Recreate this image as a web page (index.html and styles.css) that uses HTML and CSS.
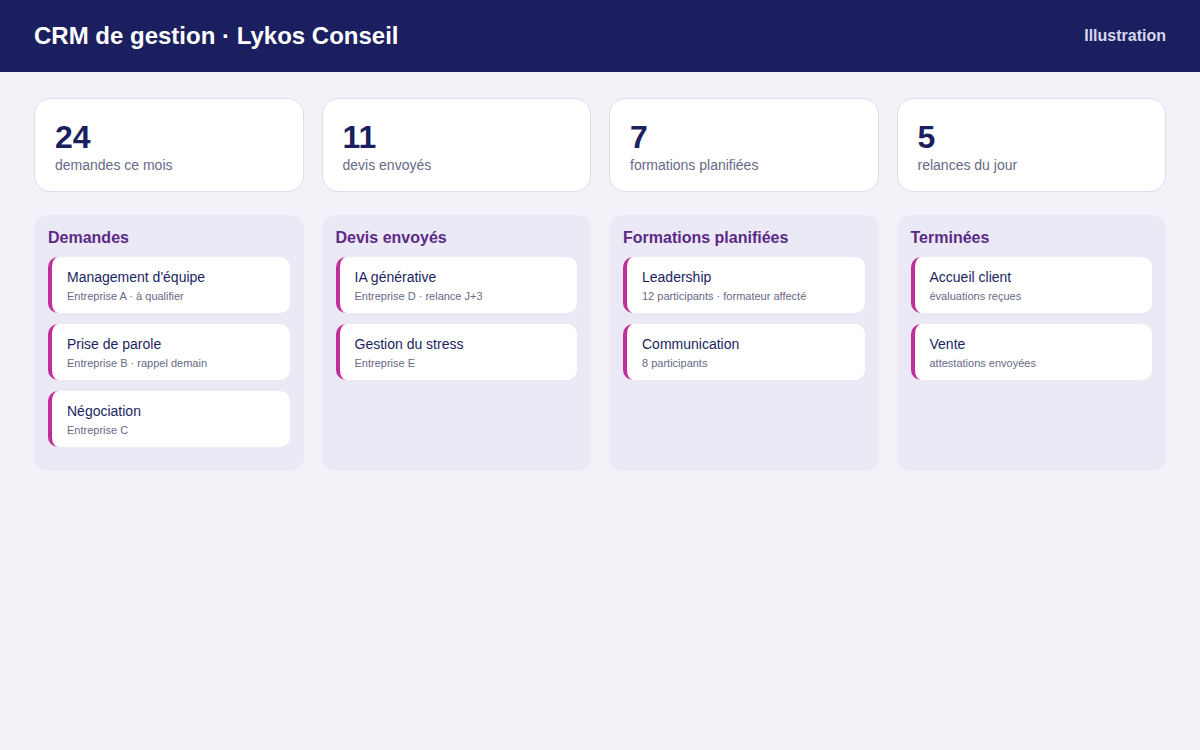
FILE: index.html
```html
<!DOCTYPE html>
<html lang="fr">
<head>
    <meta charset="UTF-8">
    <meta name="viewport" content="width=device-width, initial-scale=1.0">
    <title>CRM de gestion · Lykos Conseil</title>
    <link rel="stylesheet" href="styles.css">
</head>
<body>
    <header class="topbar">
        <h1>CRM de gestion · Lykos Conseil</h1>
        <span class="tag">Illustration</span>
    </header>

    <main class="content">
        <!-- chiffres clés -->
        <section class="stats">
            <div class="stat">
                <div class="stat-value">24</div>
                <div class="stat-label">demandes ce mois</div>
            </div>
            <div class="stat">
                <div class="stat-value">11</div>
                <div class="stat-label">devis envoyés</div>
            </div>
            <div class="stat">
                <div class="stat-value">7</div>
                <div class="stat-label">formations planifiées</div>
            </div>
            <div class="stat">
                <div class="stat-value">5</div>
                <div class="stat-label">relances du jour</div>
            </div>
        </section>

        <!-- pipeline -->
        <section class="board">
            <div class="column">
                <h2>Demandes</h2>
                <div class="card">
                    <div class="card-title">Management d'équipe</div>
                    <div class="card-sub">Entreprise A · à qualifier</div>
                </div>
                <div class="card">
                    <div class="card-title">Prise de parole</div>
                    <div class="card-sub">Entreprise B · rappel demain</div>
                </div>
                <div class="card">
                    <div class="card-title">Négociation</div>
                    <div class="card-sub">Entreprise C</div>
                </div>
            </div>
            <div class="column">
                <h2>Devis envoyés</h2>
                <div class="card">
                    <div class="card-title">IA générative</div>
                    <div class="card-sub">Entreprise D · relance J+3</div>
                </div>
                <div class="card">
                    <div class="card-title">Gestion du stress</div>
                    <div class="card-sub">Entreprise E</div>
                </div>
            </div>
            <div class="column">
                <h2>Formations planifiées</h2>
                <div class="card">
                    <div class="card-title">Leadership</div>
                    <div class="card-sub">12 participants · formateur affecté</div>
                </div>
                <div class="card">
                    <div class="card-title">Communication</div>
                    <div class="card-sub">8 participants</div>
                </div>
            </div>
            <div class="column">
                <h2>Terminées</h2>
                <div class="card">
                    <div class="card-title">Accueil client</div>
                    <div class="card-sub">évaluations reçues</div>
                </div>
                <div class="card">
                    <div class="card-title">Vente</div>
                    <div class="card-sub">attestations envoyées</div>
                </div>
            </div>
        </section>
    </main>
</body>
</html>
```

FILE: styles.css
```css
* {
    margin: 0;
    padding: 0;
    box-sizing: border-box;
}
body {
    font-family: "Liberation Sans", Arial, sans-serif;
    background-color: #f3f2f9;
    color: #1b1f5f;
}

/* barre du haut */
.topbar {
    height: 72px;
    background-color: #1b1f5f;
    display: flex;
    align-items: center;
    justify-content: space-between;
    padding: 0 34px;
}
.topbar h1 {
    font-size: 24px;
    font-weight: 700;
    color: #fff;
}
.tag {
    font-size: 16px;
    font-weight: 700;
    color: #d8d6f0;
}

.content {
    padding: 26px 34px;
}

/* chiffres */
.stats {
    display: grid;
    grid-template-columns: repeat(4, 1fr);
    gap: 18px;
}
.stat {
    background-color: #fff;
    border: 1px solid #dedcef;
    border-radius: 16px;
    height: 94px;
    padding: 19px 20px;
}
.stat-value {
    font-size: 32px;
    font-weight: 700;
    line-height: 38px;
}
.stat-label {
    font-size: 14px;
    color: #676a86;
    line-height: 18px;
}

/* colonnes */
.board {
    display: grid;
    grid-template-columns: repeat(4, 1fr);
    gap: 18px;
    margin-top: 23px;
}
.column {
    background-color: #ebe9f5;
    border-radius: 14px;
    padding: 14px 14px 24px;
}
.column h2 {
    font-size: 16px;
    font-weight: 700;
    color: #5b2a86;
    line-height: 18px;
    margin-bottom: 10px;
}
.card {
    background-color: #fff;
    border-left: 4px solid #c02f97;
    border-radius: 10px;
    height: 56px;
    padding: 11px 15px 9px;
    margin-bottom: 11px;
}
.card:last-child {
    margin-bottom: 0;
}
.card-title {
    font-size: 14px;
    line-height: 18px;
    color: #1b1f5f;
}
.card-sub {
    font-size: 11px;
    line-height: 15px;
    margin-top: 3px;
    color: #676a86;
}
```
